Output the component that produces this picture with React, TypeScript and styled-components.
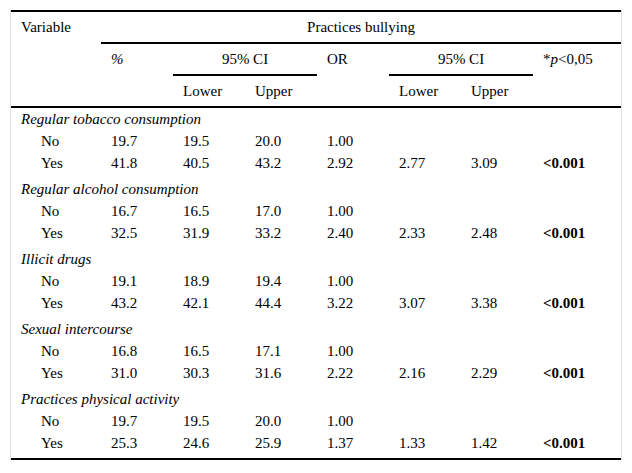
import styled, { createGlobalStyle } from 'styled-components';

const serif = '"Liberation Serif", "Times New Roman", serif';

const GlobalStyle = createGlobalStyle`
  html, body {
    margin: 0;
    padding: 0;
    background: #fff;
  }
  body {
    font-family: ${serif};
    color: #000;
  }
`;

const Page = styled.div`
  padding: 10px 10px 0 10px;
`;

const Frame = styled.div`
  width: 612px;
  box-sizing: border-box;
  border-left: 1px solid #e2e2e2;
  border-right: 1px solid #e2e2e2;
`;

const Table = styled.table`
  width: 100%;
  border-collapse: collapse;
  table-layout: fixed;
  font-family: ${serif};
  font-size: 15px;
  line-height: 18px;
  color: #000;
  border-top: 2px solid #000;
  border-bottom: 2px solid #000;
`;

const HeadCell = styled.th<{ $align?: 'left' | 'center'; $rule?: boolean }>`
  font-family: ${serif};
  font-size: 15px;
  font-weight: normal;
  text-align: ${({ $align }) => $align ?? 'left'};
  vertical-align: top;
  padding: 6px 10px;
  border-bottom: ${({ $rule }) => ($rule ? '2px solid #000' : 'none')};
  white-space: nowrap;
`;

const Cell = styled.td<{ $indent?: boolean; $last?: boolean }>`
  font-family: ${serif};
  font-size: 15px;
  text-align: left;
  vertical-align: top;
  padding: 2px 10px ${({ $last }) => ($last ? '6px' : '2px')}
    ${({ $indent }) => ($indent ? '30px' : '10px')};
  white-space: nowrap;
`;

const GroupCell = styled.td`
  font-family: ${serif};
  font-size: 15px;
  font-style: italic;
  text-align: left;
  padding: 2px 10px;
  white-space: nowrap;
`;

const Strong = styled.span`
  font-weight: bold;
`;

const Em = styled.span`
  font-style: italic;
`;

const HeadRow = styled.tr<{ $rule?: boolean }>`
  border-bottom: ${({ $rule }) => ($rule ? '2px solid #000' : 'none')};
`;

type Row = [string, string, string, string, string, string, string];

const groups: { title: string; no: Row; yes: Row }[] = [
  {
    title: 'Regular tobacco consumption',
    no: ['19.7', '19.5', '20.0', '1.00', '', '', ''],
    yes: ['41.8', '40.5', '43.2', '2.92', '2.77', '3.09', '<0.001'],
  },
  {
    title: 'Regular alcohol consumption',
    no: ['16.7', '16.5', '17.0', '1.00', '', '', ''],
    yes: ['32.5', '31.9', '33.2', '2.40', '2.33', '2.48', '<0.001'],
  },
  {
    title: 'Illicit drugs',
    no: ['19.1', '18.9', '19.4', '1.00', '', '', ''],
    yes: ['43.2', '42.1', '44.4', '3.22', '3.07', '3.38', '<0.001'],
  },
  {
    title: 'Sexual intercourse',
    no: ['16.8', '16.5', '17.1', '1.00', '', '', ''],
    yes: ['31.0', '30.3', '31.6', '2.22', '2.16', '2.29', '<0.001'],
  },
  {
    title: 'Practices physical activity',
    no: ['19.7', '19.5', '20.0', '1.00', '', '', ''],
    yes: ['25.3', '24.6', '25.9', '1.37', '1.33', '1.42', '<0.001'],
  },
];

function DataRow({ label, values, last }: { label: string; values: Row; last?: boolean }) {
  return (
    <tr>
      <Cell $indent $last={last}>{label}</Cell>
      {values.map((v, i) => (
        <Cell key={i} $last={last}>
          {i === 6 && v ? <Strong>{v}</Strong> : v}
        </Cell>
      ))}
    </tr>
  );
}

function GroupBlock({ title, no, yes }: { title: string; no: Row; yes: Row }) {
  return (
    <>
      <tr>
        <GroupCell colSpan={8}>{title}</GroupCell>
      </tr>
      <DataRow label="No" values={no} />
      <DataRow label="Yes" values={yes} last />
    </>
  );
}

export default function App() {
  return (
    <>
      <GlobalStyle />
      <Page>
        <Frame>
          <Table>
            <colgroup>
              <col style={{ width: 90 }} />
              <col style={{ width: 72 }} />
              <col style={{ width: 72 }} />
              <col style={{ width: 72 }} />
              <col style={{ width: 72 }} />
              <col style={{ width: 72 }} />
              <col style={{ width: 72 }} />
              <col />
            </colgroup>
            <thead>
              <tr>
                <HeadCell rowSpan={3} $rule>Variable</HeadCell>
                <HeadCell colSpan={7} $align="center" $rule>Practices bullying</HeadCell>
              </tr>
              <tr>
                <HeadCell rowSpan={2} $rule><Em>%</Em></HeadCell>
                <HeadCell colSpan={2} $align="center" $rule>95% CI</HeadCell>
                <HeadCell rowSpan={2} $rule>OR</HeadCell>
                <HeadCell colSpan={2} $align="center" $rule>95% CI</HeadCell>
                <HeadCell rowSpan={2} $rule>*<Em>p</Em>&lt;0,05</HeadCell>
              </tr>
              <HeadRow $rule>
                <HeadCell>Lower</HeadCell>
                <HeadCell>Upper</HeadCell>
                <HeadCell>Lower</HeadCell>
                <HeadCell>Upper</HeadCell>
              </HeadRow>
            </thead>
            <tbody>
              {groups.map((g) => (
                <GroupBlock key={g.title} title={g.title} no={g.no} yes={g.yes} />
              ))}
            </tbody>
          </Table>
        </Frame>
      </Page>
    </>
  );
}
